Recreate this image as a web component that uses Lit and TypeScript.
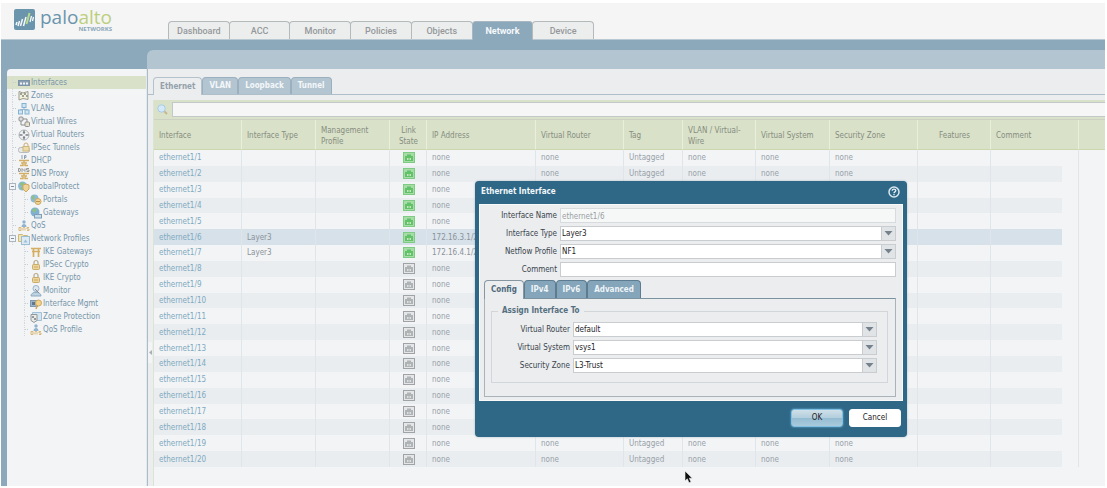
import { LitElement, html, css, svg, nothing } from "lit";
import { customElement } from "lit/decorators.js";
import { classMap } from "lit/directives/class-map.js";

const icons: Record<string, unknown> = {
  interfaces: svg`<rect x="0.5" y="3.5" width="11" height="5" fill="#8b9fb2" stroke="#7c93a8"/><path d="M2 7.5v-2h2v2zM5 7.5v-2h2v2zM8 7.5v-2h2v2z" fill="#f0f4f8"/>`,
  zones: svg`<path d="M1 1.5l4 1.5 5-1.5v8l-5-1-4 1.5z" fill="#f2f1dc" stroke="#9b9c8c"/><path d="M2 3h2v2H2zM4 5h2v2H4zM6 3h2v2H6zM8 5h2v2H8z" fill="#a0a196"/>`,
  vlans: svg`<path d="M6 4v3M2.500 9V6.500h7V9" stroke="#9db9cc" fill="none"/><rect x="4" y="0.500" width="4" height="4" fill="#cfe5f3" stroke="#86b2d0"/><rect x="0.500" y="7" width="4" height="4" fill="#cfe5f3" stroke="#86b2d0"/><rect x="7" y="7" width="4" height="4" fill="#cfe5f3" stroke="#86b2d0"/>`,
  wires: svg`<rect x="1" y="1" width="4" height="4" rx="1" fill="#ddd" stroke="#909090"/><path d="M3 5v4h4M5 3h4v3" fill="none" stroke="#8d8d8d"/><rect x="7" y="6" width="4.500" height="4.500" rx="1" fill="#e6dfce" stroke="#909090"/>`,
  routers: svg`<circle cx="6" cy="6" r="5" fill="#f0f1f2" stroke="#b0b3b6"/><path d="M6 1.500v3M6 7.500v3M1.500 6h3M7.500 6h3" stroke="#7d8388" stroke-width="1.500"/><path d="M4.500 3L6 5l1.500-2M4.500 9L6 7l1.500 2" fill="#7d8388"/>`,
  tunnels: svg`<rect x="0.500" y="5.500" width="11" height="5" rx="2" fill="#e7e9ea" stroke="#b5babd"/><path d="M6 5V3a2 2 0 0 1 4 0v2" fill="none" stroke="#c9ae79"/><rect x="5" y="4.500" width="6" height="4.500" fill="#ecdca8" stroke="#cfb67a"/>`,
  dhcp: svg`<path d="M4 0v4M6.500 4V.5h1.500v2H6.500" fill="none" stroke="#8ba0b4"/><path d="M1 5.500h10M2 10.500h3V8H3M10 10.500H7V8h2M6 5v3" fill="none" stroke="#d3ae66" stroke-width="1.500"/>`,
  dns: svg`<path d="M.5 3.500v-3h1.500l.5 1.500-.5 1.500zM4 4V.5L7 3.500V.5M11 .5H8.500V2H11v1.500H8.500" fill="none" stroke="#9a9a9a"/><path d="M1 5.500h10M2 10.500h3V8H3M10 10.500H7V8h2M6 5v3" fill="none" stroke="#d3ae66" stroke-width="1.500"/>`,
  globe: svg`<circle cx="4.500" cy="5" r="4.500" fill="#8dbad6"/><path d="M2 2l3-1 1 2-2 2-2-1zM2 7l2-1 2 2-2 1z" fill="#8dc084"/><path d="M8 3l3 1v4l-3 3-3-3V4z" fill="#f0d497" stroke="#cfa75d"/>`,
  portals: svg`<circle cx="4.500" cy="4.500" r="4" fill="#8dbad6"/><path d="M1 3l3-2 1 3-2 2z" fill="#8dc084"/><circle cx="8" cy="7.500" r="3" fill="#f0d497" stroke="#cfa75d"/><path d="M6 7.500h4" stroke="#b99148"/>`,
  gateways: svg`<circle cx="5" cy="5" r="4.500" fill="#7fb0d3"/><path d="M2 3l3-2 2 2-3 3z" fill="#8dc084"/><rect x="4.500" y="7.500" width="7" height="3.500" fill="#c9dcea" stroke="#7f9fb7"/>`,
  qos: svg`<circle cx="6" cy="2" r="1.700" fill="#91b3cf"/><path d="M3.500 7c0-4 5-4 5 0z" fill="#91b3cf"/><path d="M1 7.500h2v3H1zM5 10.500v-2L6 7l1 1.500v2M11 7.500H9V9h2v1.500H9" fill="none" stroke="#d9b672"/>`,
  profiles: svg`<path d="M.5 1.500h4l1 1h4v6h-9z" fill="#f4e4af" stroke="#cdb87b"/><rect x="3.500" y="3.500" width="8" height="8" fill="#dbeaf4" stroke="#9dbdd3"/><path d="M5.500 9.500l2-3 2 3z" fill="#9dbdd3"/>`,
  gate: svg`<path d="M1 2.500h10M2 5.500h8M3.500 2v9M8.500 2v9" stroke="#d5ae62" stroke-width="1.700" fill="none"/>`,
  lock: svg`<path d="M4 6V3.500a2 2 0 0 1 4 0V6" fill="none" stroke="#b5a88c" stroke-width="1.200"/><rect x="2.500" y="5.500" width="7" height="5" rx="1" fill="#ecd59b" stroke="#c9ab6b"/><path d="M4 8h4" stroke="#c9ab6b"/>`,
  monitor: svg`<circle cx="6" cy="3.500" r="3" fill="#dbe8f2" stroke="#9ab4c8"/><path d="M1 11c0-5 10-5 10 0z" fill="#bed2e2" stroke="#8ca9bf"/><path d="M5 4l4 4" stroke="#8c8f92"/>`,
  mgmt: svg`<rect x="0.500" y="2.500" width="7" height="6" fill="#9bb4c9" stroke="#7e99b0"/><rect x="2" y="4" width="3" height="3" fill="#5d7890"/><circle cx="8.500" cy="5" r="3" fill="#f2d390" stroke="#cfa75d"/><path d="M7 8l-1 3" stroke="#cfa75d" stroke-width="1.500"/>`,
  zoneprot: svg`<path d="M2.500 1.500h9v8h-9z" fill="#d3e5f1" stroke="#a3c1d6"/><path d="M1 3.500h6v6l-3 2-3-2z" fill="#e9ebe6" stroke="#94989b"/><path d="M2 5h2v2H2zM4 7h2v2H4z" fill="#94989b"/>`,
};

interface Node {
  label: string;
  icon: string;
  level?: number;
  open?: boolean;
  selected?: boolean;
}

const tree: Node[] = [
  { label: "Interfaces", icon: "interfaces", selected: true },
  { label: "Zones", icon: "zones" },
  { label: "VLANs", icon: "vlans" },
  { label: "Virtual Wires", icon: "wires" },
  { label: "Virtual Routers", icon: "routers" },
  { label: "IPSec Tunnels", icon: "tunnels" },
  { label: "DHCP", icon: "dhcp" },
  { label: "DNS Proxy", icon: "dns" },
  { label: "GlobalProtect", icon: "globe", open: true },
  { label: "Portals", icon: "portals", level: 2 },
  { label: "Gateways", icon: "gateways", level: 2 },
  { label: "QoS", icon: "qos" },
  { label: "Network Profiles", icon: "profiles", open: true },
  { label: "IKE Gateways", icon: "gate", level: 2 },
  { label: "IPSec Crypto", icon: "lock", level: 2 },
  { label: "IKE Crypto", icon: "lock", level: 2 },
  { label: "Monitor", icon: "monitor", level: 2 },
  { label: "Interface Mgmt", icon: "mgmt", level: 2 },
  { label: "Zone Protection", icon: "zoneprot", level: 2 },
  { label: "QoS Profile", icon: "qos", level: 2 },
];

const columns = [
  { label: "Interface", cls: "w88" },
  { label: "Interface Type", cls: "w74" },
  { label: "Management Profile", cls: "w74" },
  { label: "Link State", cls: "w37", center: true },
  { label: "IP Address", cls: "w109" },
  { label: "Virtual Router", cls: "w88" },
  { label: "Tag", cls: "w59" },
  { label: "VLAN / Virtual-Wire", cls: "w73" },
  { label: "Virtual System", cls: "w74" },
  { label: "Security Zone", cls: "w88" },
  { label: "Features", cls: "w73", center: true },
  { label: "Comment", cls: "w88" },
];

const addresses: Record<number, string> = { 6: "172.16.3.1/24", 7: "172.16.4.1/24" };

const rows = Array.from({ length: 20 }, (_, i) => {
  const n = i + 1;
  return {
    name: `ethernet1/${n}`,
    type: addresses[n] ? "Layer3" : "",
    up: n <= 7,
    ip: addresses[n] ?? "none",
    selected: n === 6,
  };
});

@customElement("nav-tree")
class NavTree extends LitElement {
  static styles = css`
    :host { display: block; }
    .list { list-style: none; margin: 0; padding: 0; }
    .item {
      display: flex; align-items: center; height: 13px;
      padding-left: 5px; position: relative;
    }
    .item::before {
      content: ""; position: absolute; left: 5px; top: 0; bottom: 0;
      border-left: 1px dotted #d3d8dc;
    }
    .item.nested::after {
      content: ""; position: absolute; left: 17px; top: 0; bottom: 0;
      border-left: 1px dotted #d3d8dc;
    }
    .item.nested { padding-left: 17px; }
    .item.apart::before { display: none; }
    .selected { background: #d9e1c9; }
    .twig { width: 4px; border-top: 1px dotted #c6ccd1; margin-right: 2px; }
    .box {
      position: absolute; left: 2px; top: 3px; width: 7px; height: 7px;
      box-sizing: border-box; border: 1px solid #a9b5bf; background: #f2f4f6;
      padding: 0; z-index: 1; display: grid; place-items: center;
    }
    .box::before { content: ""; width: 3px; height: 1px; background: #7f8f9c; }
    .icon { width: 12px; height: 12px; margin-right: 1px; flex: none; }
    .link { color: #7896a9; text-decoration: none; white-space: nowrap; line-height: 13px; }
  `;

  render() {
    return html`<ul class="list">
      ${tree.map((n, i) => html`
        <li class=${classMap({ item: true, selected: !!n.selected, nested: n.level === 2, apart: i > 12 })}>
          ${n.open ? html`<button class="box" aria-label="Collapse ${n.label}"></button>` : nothing}
          <span class="twig"></span>
          <svg class="icon" viewBox="0 0 12 12" aria-hidden="true">${icons[n.icon]}</svg>
          <a class="link" href="#">${n.label}</a>
        </li>`)}
    </ul>`;
  }
}

@customElement("interface-grid")
class InterfaceGrid extends LitElement {
  static styles = css`
    :host { display: block; background: #f2f4f6; border-left: 1px solid #dde3d3; }
    .search {
      display: flex; align-items: center; height: 20px; background: #d9e1c9;
      box-sizing: border-box; border-bottom: 1px solid #ccd1c4;
    }
    .glass { width: 11px; height: 11px; margin: 0 4px 0 3px; flex: none; }
    .query {
      flex: 1; min-width: 0; height: 15px; box-sizing: border-box; font: inherit;
      background: #f6f6f6; border: 1px solid #c3c8c8; border-right: 0; padding: 0 3px; outline: 0;
    }
    .grid { border-collapse: separate; border-spacing: 0; table-layout: fixed; width: 100%; height: 347px; }
    .w37 { width: 37px; }
    .w59 { width: 59px; }
    .w73 { width: 73px; }
    .w74 { width: 74px; }
    .w88 { width: 88px; }
    .w109 { width: 109px; }
    th {
      height: 30px; padding: 2px 4px 0 5px; box-sizing: border-box; text-align: left; font-weight: normal;
      line-height: 11px; color: #868d80; background: #d9e1c9;
      border-right: 1px solid #e9efd9; border-bottom: 1px solid #cbd7ac;
    }
    td {
      padding: 0 4px 0 5px; line-height: 11px; color: #98a1a8; white-space: nowrap; overflow: hidden;
      border-right: 1px solid #e0e5e9;
    }
    .center { text-align: center; }
    .row:nth-child(even) .fill { background-color: #e9edf0; }
    .row.selected .fill { background-color: #d6e1ea; }
    .comment {
      background: linear-gradient(#e9edf0, #e9edf0) left / 0 100% no-repeat;
    }
    .row:nth-child(even) .comment { background-size: calc(100% - 16px) 100%; }
    .row.selected .comment { background-image: linear-gradient(#d6e1ea, #d6e1ea); }
    .strong { color: #8b9298; }
    .rest { border-right: 0; }
    .link { color: #7fa9bf; text-decoration: none; }
    .port { display: block; width: 12px; height: 11px; margin: 0 auto; }
  `;

  port(up: boolean) {
    const line = up ? "#7fcb83" : "#a0a3a5";
    const body = up ? "#a5dca8" : "#e4e6e7";
    const plug = up ? "#62c268" : "#b0b3b5";
    return html`<svg class="port" viewBox="0 0 12 11" role="img" aria-label=${up ? "up" : "down"}>
      <rect x="0.5" y="0.5" width="11" height="10" fill=${body} stroke=${line}></rect>
      <path d="M2 9V4h2V2.500h4V4h2v5z" fill=${plug}></path>
      <path d="M4.500 6v2M6 6v2M7.500 6v2" stroke="#eef3ef" stroke-width="0.700"></path>
    </svg>`;
  }

  render() {
    return html`
      <div class="search">
        <svg class="glass" viewBox="0 0 11 11" aria-hidden="true">
          <path d="M6.500 6.500l3.500 3.500" stroke="#c9b68f" stroke-width="2"></path>
          <circle cx="4.500" cy="4.500" r="3.700" fill="#d3e8f8" stroke="#a9cbe4"></circle>
        </svg>
        <input class="query" type="text" aria-label="Filter interfaces" />
      </div>
      <table class="grid">
        <colgroup>${columns.map((c) => html`<col class=${c.cls} />`)}<col /></colgroup>
        <thead>
          <tr>
            ${columns.map((c) => html`<th class=${c.center ? "center" : ""}>${c.label}</th>`)}
            <th class="rest"></th>
          </tr>
        </thead>
        <tbody>
          ${rows.map((r) => html`
            <tr class=${classMap({ row: true, selected: r.selected })}>
              <td class="fill"><a class="link" href="#">${r.name}</a></td>
              <td class="fill strong">${r.type}</td>
              <td class="fill"></td>
              <td class="fill">${this.port(r.up)}</td>
              <td class=${classMap({ fill: true, strong: !!r.type })}>${r.ip}</td>
              <td class="fill">none</td>
              <td class="fill">Untagged</td>
              <td class="fill">none</td>
              <td class="fill">none</td>
              <td class="fill">none</td>
              <td class="fill"></td>
              <td class="comment"></td>
              <td class="rest"></td>
            </tr>`)}
        </tbody>
      </table>`;
  }
}

@customElement("interface-dialog")
class InterfaceDialog extends LitElement {
  static styles = css`
    :host {
      display: block; box-sizing: border-box; padding: 0 4px; background: #2f6886;
      border-radius: 4px; box-shadow: 0 0 2px #9fb0bb; color: #3a444c;
    }
    .title {
      display: flex; align-items: center; justify-content: space-between;
      height: 23px; padding: 0 2px 2px; box-sizing: border-box;
    }
    .heading { margin: 0; font-size: 8px; font-weight: bold; line-height: 12px; color: #f2f7fa; }
    .help { width: 12px; height: 12px; padding: 0; border: 0; background: none; display: block; margin-right: 1px; }
    .help svg { display: block; }
    .body { background: #ebedef; border: 1px solid #f7f9fa; padding: 3px 6px 3px 4px; }
    .fields { display: grid; grid-template-columns: 73px 1fr; gap: 3px; align-items: center; }
    .label { text-align: right; line-height: 12px; white-space: nowrap; }
    .box {
      font: inherit; color: #1d2226; width: 100%; height: 15px; box-sizing: border-box; margin: 0;
      padding: 1px 1px 0; border: 1px solid #c9cdd0; border-radius: 0; background: #fff; appearance: none; outline: 0;
    }
    .box:disabled { color: #9a9fa3; background: #f6f8f8; opacity: 1; border-color: #d8dbdd; }
    .combo { display: grid; grid-template-columns: 1fr 15px; }
    .combo .box { grid-area: 1 / 1 / 2 / 3; }
    .arrow {
      grid-area: 1 / 2; pointer-events: none; z-index: 1; box-sizing: border-box; background: #e1e4e6;
      border: 1px solid #c9cdd0; display: grid; place-items: center;
    }
    .tabs { display: flex; margin-top: 3px; }
    .tab {
      font: inherit; font-weight: bold; height: 18px; line-height: 12px; padding: 0 6px; margin: 0; color: #eef4f7;
      background: #84a5ba; border: 1px solid #5d7c8f; border-bottom: 0; border-radius: 4px 4px 0 0;
    }
    .tab.active { background: #ebedef; color: #4f6a7c; border-color: #8797a2; height: 19px; margin-bottom: -1px; z-index: 1; }
    .panel { border: 1px solid #aab3b9; border-top-color: #7b929f; padding: 7px 7px 13px 6px; }
    .group { margin: 0; border: 1px solid #d3d6d9; padding: 6px 10px 9px 5px; min-width: 0; }
    .legend { font-weight: bold; color: #56707f; padding: 0 4px; line-height: 10px; margin-left: 1px; }
    .footer {
      display: flex; justify-content: flex-end; align-items: center; gap: 6px;
      height: 36px; padding: 0 2px 2px 0; box-sizing: border-box;
    }
    .button {
      font: inherit; width: 52px; height: 18px; padding: 0; border-radius: 3px; color: #1d2226;
      border: 1px solid #fff; background: #fff;
    }
    .button.primary { border-color: #7fc0e4; background: linear-gradient(#cfe0e9, #b3cedc 49%, #94bcd2 51%, #a9cbdc); box-shadow: 0 0 2px #7fc0e4; }
  `;

  combo(id: string, label: string, value: string) {
    return html`
      <label class="label" for=${id}>${label}</label>
      <span class="combo">
        <select class="box" id=${id}><option>${value}</option></select>
        <span class="arrow"><svg width="9" height="5" viewBox="0 0 9 5"><path d="M0.500 0h8L4.500 4.500z" fill="#75828b"></path></svg></span>
      </span>`;
  }

  render() {
    return html`
      <div class="title">
        <h2 class="heading">Ethernet Interface</h2>
        <button class="help" aria-label="Help">
          <svg width="12" height="12" viewBox="0 0 12 12">
            <circle cx="6" cy="6" r="5" fill="#2f6886" stroke="#d9e8f0" stroke-width="1.500"></circle>
            <path d="M4.200 4.800c0-2.400 3.600-2.200 3.600-.2C7.800 6 6 5.800 6 7.200M6 8v1.300" fill="none" stroke="#e6f0f5" stroke-width="1.300"></path>
          </svg>
        </button>
      </div>
      <div class="body">
        <div class="fields">
          <label class="label" for="name">Interface Name</label>
          <input class="box" id="name" type="text" value="ethernet1/6" disabled />
          ${this.combo("type", "Interface Type", "Layer3")}
          ${this.combo("netflow", "Netflow Profile", "NF1")}
          <label class="label" for="comment">Comment</label>
          <input class="box" id="comment" type="text" />
        </div>
        <div class="tabs" role="tablist">
          ${["Config", "IPv4", "IPv6", "Advanced"].map((t, i) => html`
            <button class=${classMap({ tab: true, active: i === 0 })} role="tab" aria-selected=${i === 0}>${t}</button>`)}
        </div>
        <div class="panel" role="tabpanel">
          <fieldset class="group">
            <legend class="legend">Assign Interface To</legend>
            <div class="fields">
              ${this.combo("router", "Virtual Router", "default")}
              ${this.combo("system", "Virtual System", "vsys1")}
              ${this.combo("zone", "Security Zone", "L3-Trust")}
            </div>
          </fieldset>
        </div>
      </div>
      <div class="footer">
        <button class="button primary">OK</button>
        <button class="button">Cancel</button>
      </div>`;
  }
}

@customElement("app-root")
class AppRoot extends LitElement {
  static styles = css`
    :host {
      display: flex; flex-direction: column; box-sizing: border-box; min-height: 100vh;
      padding: 3px 2px 2px 1px; background: #fff; position: relative; overflow: hidden;
      font: 8px/12px "DejaVu Sans Condensed", "DejaVu Sans", sans-serif;
    }
    .header {
      display: flex; align-items: flex-end; height: 37px; box-sizing: border-box;
      background: #f5f5f5; border-bottom: 1px solid #b9c9d3;
    }
    .brand { display: flex; align-items: flex-start; width: 154px; height: 30px; padding-left: 13px; box-sizing: border-box; flex: none; }
    .mark { width: 21px; height: 21px; flex: none; }
    .words { display: flex; flex-direction: column; align-items: flex-end; margin-left: 5px; }
    .name { font: 19px/17px "Open Sans", sans-serif; color: #6b94ad; }
    .lime { color: #bccf7e; }
    .sub { font: bold 6px/6px "Open Sans", sans-serif; color: #8ca8bb; }
    .menu { display: flex; width: 425px; margin-left: 13px; z-index: 1; }
    .entry {
      flex: 1; height: 18px; margin-right: -1px; padding: 0; box-sizing: border-box;
      font: 500 9px/12px Roboto, sans-serif; color: #94989a;
      background: #eceded; border: 1px solid #b4b9bb; border-bottom: 0; border-radius: 4px 4px 0 0;
    }
    .entry.active { background: #8ca8bb; color: #f6f9fa; font-weight: bold; border-color: #a7b6c0; height: 19px; margin-bottom: -1px; }
    .page { flex: 1; display: flex; background: #8ca8bb; padding: 10px 0 0 6px; }
    .side { width: 140px; flex: none; margin-top: 19px; background: #f2f4f6; border-radius: 4px 0 0 0; box-sizing: border-box; padding-top: 7px; border-right: 1px solid #e6e9eb; }
    .main { flex: 1; min-width: 0; display: flex; flex-direction: column; border-radius: 6px 0 0 0; background: #b3c5d1; padding-top: 19px; }
    .work { flex: 1; display: flex; flex-direction: column; background: #ebedef; border-left: 1px solid #a9bcc7; }
    .tabs { display: flex; padding: 8px 0 0 5px; border-bottom: 1px solid #aebfc9; }
    .tab {
      font: inherit; font-weight: bold; line-height: 12px; height: 17px; padding: 0 6px; color: #f3f7f9;
      background: #b3c5d1; border: 1px solid #9bb0be; border-bottom: 0; border-radius: 4px 4px 0 0;
    }
    .tab.active { background: #ebedef; color: #93a1aa; height: 18px; margin-bottom: -1px; border-color: #b4c2cb; }
    .content { flex: 1; display: flex; }
    .splitter { width: 5px; display: flex; flex-direction: column; }
    .splitter::before { content: ""; flex: 2; }
    .splitter::after { content: ""; flex: 1; }
    .handle { height: 21px; width: 4px; padding: 0; border: 0; background: #f2f4f6; display: grid; place-items: center; }
    .grid { flex: 1; min-width: 0; margin-top: 5px; }
    .dialog { position: absolute; left: 475px; top: 181px; width: 432px; z-index: 2; }
    .cursor { position: absolute; left: 684px; top: 470px; width: 9px; height: 14px; z-index: 3; }
  `;

  render() {
    const menu = ["Dashboard", "ACC", "Monitor", "Policies", "Objects", "Network", "Device"];
    return html`
      <header class="header">
        <div class="brand">
          <svg class="mark" viewBox="0 0 21 21" aria-hidden="true">
            <rect width="21" height="21" rx="2" fill="#6b94ad"></rect>
            <path d="M3 13l-1 3M5.500 12l-1.500 5M8.500 10l-2 7M12 8l-2.500 9" stroke="#f5f8fa" stroke-width="1.500"></path>
            <path d="M15.500 4l-3 11" stroke="#b6d98a" stroke-width="2"></path>
            <path d="M17.500 7l-1.500 6M19.500 8l-1 4" stroke="#f5f8fa" stroke-width="1.300"></path>
          </svg>
          <div class="words">
            <span class="name">palo<span class="lime">alto</span></span>
            <span class="sub">NETWORKS</span>
          </div>
        </div>
        <nav class="menu">
          ${menu.map((m) => html`<button class=${classMap({ entry: true, active: m === "Network" })}>${m}</button>`)}
        </nav>
      </header>
      <div class="page">
        <nav-tree class="side"></nav-tree>
        <main class="main">
          <div class="work">
            <div class="tabs" role="tablist">
              ${["Ethernet", "VLAN", "Loopback", "Tunnel"].map((t, i) => html`
                <button class=${classMap({ tab: true, active: i === 0 })} role="tab" aria-selected=${i === 0}>${t}</button>`)}
            </div>
            <div class="content">
              <div class="splitter">
                <button class="handle" aria-label="Collapse navigation">
                  <svg width="3" height="5" viewBox="0 0 3 5"><path d="M3 0v5L0 2.500z" fill="#a9b0b5"></path></svg>
                </button>
              </div>
              <interface-grid class="grid"></interface-grid>
            </div>
          </div>
        </main>
      </div>
      <interface-dialog class="dialog" role="dialog" aria-label="Ethernet Interface"></interface-dialog>
      <svg class="cursor" viewBox="0 0 9 14" aria-hidden="true">
        <path d="M1 1v10l2.300-2.200L5 12.800l2-.9-1.700-3.700h3z" fill="#111" stroke="#f4f4f4" stroke-width="0.600"></path>
      </svg>`;
  }
}
